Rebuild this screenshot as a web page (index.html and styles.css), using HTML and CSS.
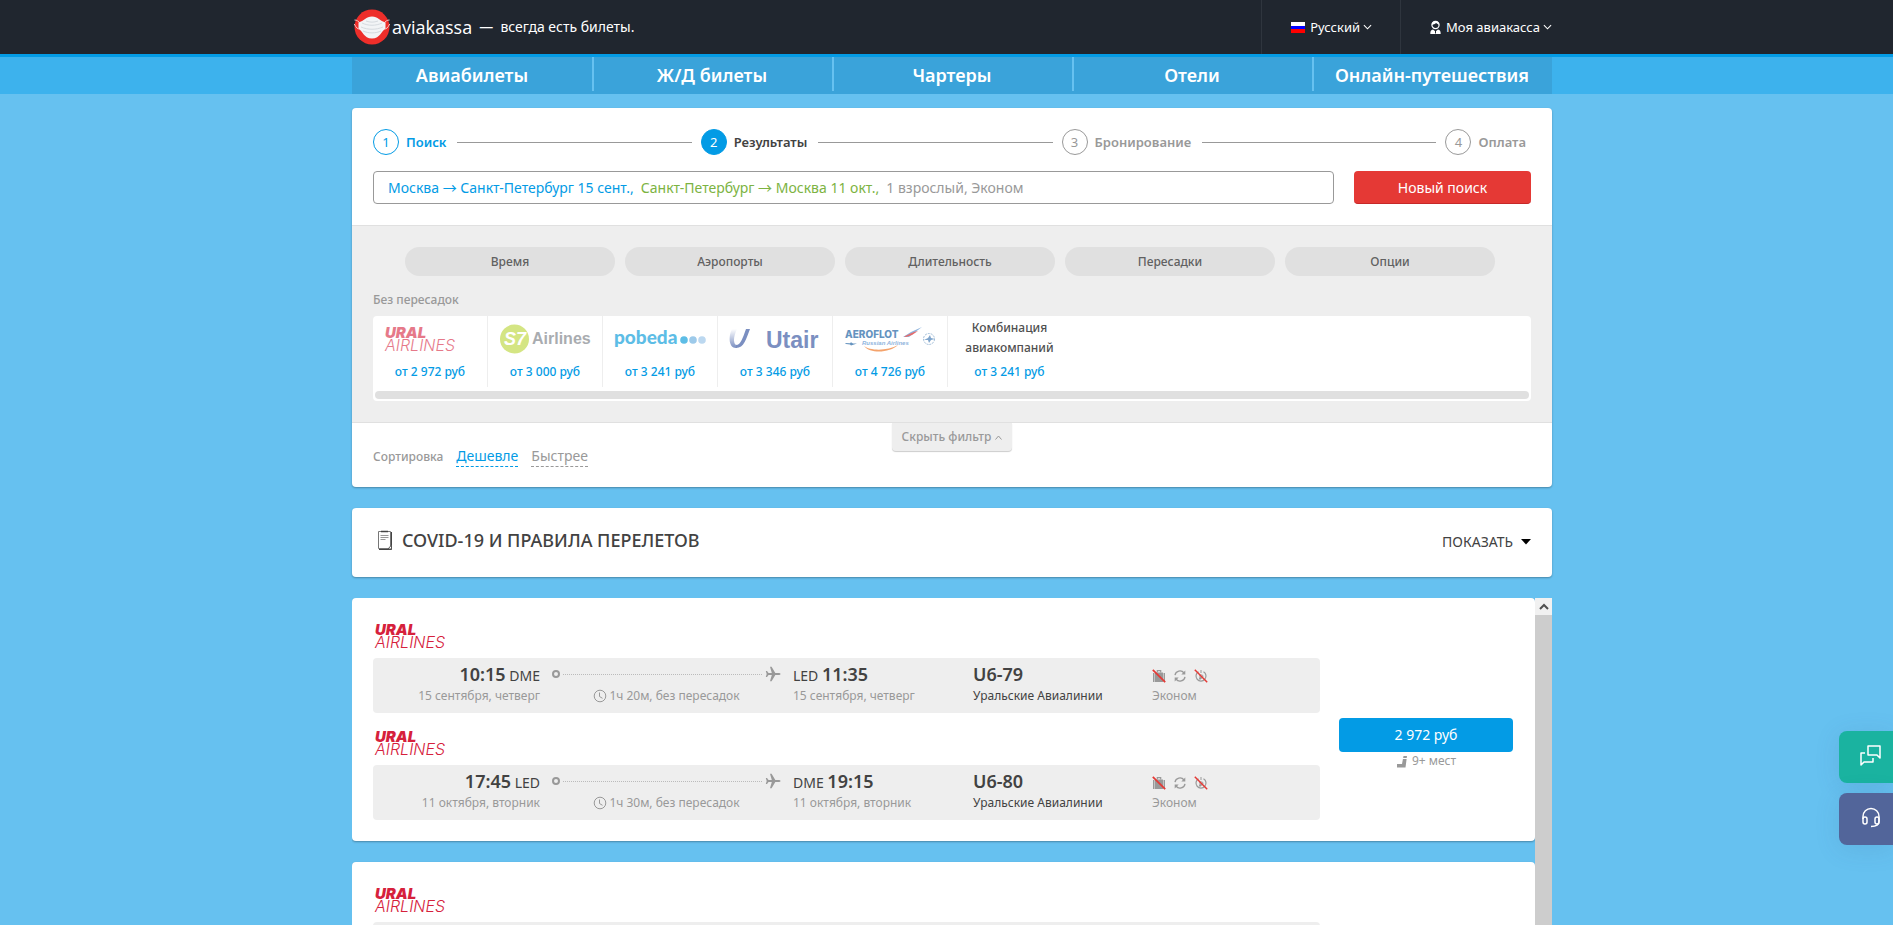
FILE: index.html
```html
<!DOCTYPE html>
<html lang="ru">
<head>
<meta charset="utf-8">
<title>Aviakassa — результаты поиска</title>
<link rel="stylesheet" href="styles.css">
</head>
<body>
<svg class="defs" aria-hidden="true">
  <symbol id="plane" viewBox="0 0 16 16">
    <path d="M15.500 8c0-.8-1-1.100-2-1.100h-3.200L6.600.8H5l1.800 6.100H3.500L2 5H.8l.9 3-.9 3H2l1.500-1.900h3.300L5 15.200h1.600l3.700-6.100h3.200c1 0 2-.3 2-1.100z" fill="#999"/>
  </symbol>
  <symbol id="clock" viewBox="0 0 14 14">
    <circle cx="7" cy="7" r="5.800" fill="none" stroke="#999"/>
    <path d="M6.500 3.500v4l3 1.800" fill="none" stroke="#999"/>
  </symbol>
  <symbol id="bag" viewBox="0 0 14 14">
    <path d="M1 4h1.500v9H1zM3 3.500h8V13H3zM11.500 4H13v9h-1.500z" fill="#999"/>
    <path d="M5.300 3.500V1.600h3.400v1.900" fill="none" stroke="#999" stroke-width="1.200"/>
    <path d="M.8.8l12.400 12.400" stroke="#e53935" stroke-width="1.700"/>
  </symbol>
  <symbol id="refresh" viewBox="0 0 14 14">
    <path d="M2 6.200a5 5 0 0 1 9-2.200M12 7.800a5 5 0 0 1-9 2.200" fill="none" stroke="#999" stroke-width="1.300"/>
    <path d="M12.300 1.400v4H8.300zM1.700 12.600v-4h4z" fill="#999"/>
  </symbol>
  <symbol id="norefund" viewBox="0 0 14 14">
    <path d="M4.500 2.700a5 5 0 1 0 5 0" fill="none" stroke="#999" stroke-width="1.200"/>
    <path d="M7 1v3M5.500 6h2.300a1.200 1.200 0 0 1 0 2.400H5.800M6 6v5M5.200 9.500h2.500" fill="none" stroke="#999"/>
    <path d="M.8.8l12.400 12.400" stroke="#e53935" stroke-width="1.500"/>
  </symbol>
  <symbol id="chev" viewBox="0 0 10 6"><path d="M1 1l4 4 4-4" fill="none" stroke="currentColor" stroke-width="1.200"/></symbol>
</svg>

<header class="top">
  <div class="wrap top-row">
    <a class="logo" href="#" aria-label="aviakassa">
      <svg width="36" height="36" viewBox="0 0 36 36" aria-hidden="true">
        <circle cx="18" cy="18" r="17.500" fill="#ee2e2a"/>
        <path d="M5 13C3 11 1 11 .5 11M4.500 20C2 19 1 16 .3 15M31 13c2-2 4-2 4.500-2M31.500 20c2.500-1 3.500-4 4.200-5" fill="none" stroke="#f3c9c8"/>
        <path d="M4.500 13.500C10 12 12 7.500 18 7.500s8 4.500 13.500 6v6.500c-4 1-5 9.500-13.500 9.500S8.500 21 4.500 20z" fill="#f2f4f6"/>
        <path d="M8 14c6 3 14 3 20 0M7 18c7 3 15 3 22 0M9 22c5 2.500 13 2.500 18 0M12 12c4 1.500 8 1.500 12 0" fill="none" stroke="#d5dadf"/>
      </svg>
      <span class="logo-name">aviakassa</span>
    </a>
    <span class="slogan">—&nbsp; всегда есть билеты.</span>
    <div class="top-menu">
      <button class="top-btn lang" type="button">
        <svg width="14" height="11" viewBox="0 0 14 11" aria-hidden="true"><path d="M0 0h14v4H0z" fill="#fff"/><path d="M0 4h14v3H0z" fill="#00f"/><path d="M0 7h14v4H0z" fill="red"/></svg>
        <span>Русский</span>
        <svg class="chev" width="9" height="6"><use href="#chev"/></svg>
      </button>
      <button class="top-btn account" type="button">
        <svg width="11" height="14" viewBox="0 0 11 14" aria-hidden="true"><circle cx="5.500" cy="5" r="3.600" fill="none" stroke="#fff" stroke-width="1.200"/><path d="M1.800 5C2 2 3.500 1 5.500 1s3.500 1 3.700 4C7.500 4 6.500 3 6 3 5 4 3.500 4.500 1.800 5z" fill="#fff"/><path d="M.3 14c0-3 .7-4 2.700-4.500l2.500 2 2.500-2c2 .5 2.700 1.500 2.700 4.500z" fill="#fff"/><path d="M5.500 10.500v3" stroke="#20262f"/></svg>
        <span>Моя авиакасса</span>
        <svg class="chev" width="9" height="6"><use href="#chev"/></svg>
      </button>
    </div>
  </div>
</header>

<nav class="nav">
  <div class="wrap nav-row">
    <a href="#">Авиабилеты</a><a href="#">Ж/Д билеты</a><a href="#">Чартеры</a><a href="#">Отели</a><a href="#">Онлайн-путешествия</a>
  </div>
</nav>

<main class="wrap main">
  <section class="card">
    <div class="search">
      <ol class="steps">
        <li class="done"><i>1</i><b>Поиск</b></li>
        <li class="line"></li>
        <li class="now"><i>2</i><b>Результаты</b></li>
        <li class="line"></li>
        <li><i>3</i><b>Бронирование</b></li>
        <li class="line"></li>
        <li><i>4</i><b>Оплата</b></li>
      </ol>
      <div class="query-row">
        <div class="query"><span class="out">Москва <span class="arrow">→</span> Санкт-Петербург 15 сент.,</span><span class="back">Санкт-Петербург <span class="arrow">→</span> Москва 11 окт.,</span><span>1 взрослый, Эконом</span></div>
        <button class="new-search" type="button">Новый поиск</button>
      </div>
    </div>
    <div class="filters">
      <div class="pills">
        <button type="button">Время</button>
        <button type="button">Аэропорты</button>
        <button type="button">Длительность</button>
        <button type="button">Пересадки</button>
        <button type="button">Опции</button>
      </div>
      <p class="caption">Без пересадок</p>
      <div class="carriers">
        <div class="carrier-list">
          <a class="carrier" href="#">
            <span class="ural faded"><b>URAL</b><span>AIRLINES</span></span>
            <span class="cost">от 2 972 руб</span>
          </a>
          <a class="carrier" href="#">
            <svg class="tall" width="90" height="30" viewBox="0 0 90 30" role="img" aria-label="S7 Airlines"><circle cx="14.500" cy="15" r="14.500" fill="#d4e583"/><text class="s7" x="4" y="21">S7</text><text class="s7-air" x="32" y="20">Airlines</text></svg>
            <span class="cost">от 3 000 руб</span>
          </a>
          <a class="carrier" href="#">
            <svg width="92" height="24" viewBox="0 0 92 24" role="img" aria-label="Pobeda"><text class="pobeda" x="0" y="17">pobeda</text><circle cx="70" cy="13" r="3.800" fill="#5dbde6"/><circle cx="79" cy="13" r="3.800" fill="#9dcaea"/><circle cx="88" cy="13" r="3.800" fill="#bcd8f0"/></svg>
            <span class="cost">от 3 241 руб</span>
          </a>
          <a class="carrier" href="#">
            <svg width="92" height="24" viewBox="0 0 92 24" role="img" aria-label="Utair"><defs><linearGradient id="ug" x1="0" x2="0" y1="0" y2="1"><stop offset="0" stop-color="#fff"/><stop offset="1" stop-color="#7b8fc1"/></linearGradient></defs><path d="M3 2C-1 10 0 21 7 21h1v-3c-4 0-4-8 0-16z" fill="url(#ug)"/><path d="M7 21c8 0 10-9 14-19h-4C14 10 12 18 7 18z" fill="#7b8fc1"/><text class="utair" x="37" y="21">Utair</text></svg>
            <span class="cost">от 3 346 руб</span>
          </a>
          <a class="carrier" href="#">
            <svg width="92" height="24" viewBox="0 0 92 24" role="img" aria-label="Aeroflot Russian Airlines"><text class="aero" x="1" y="11">AEROFLOT</text><text class="aero-sub" x="18" y="18">Russian Airlines</text><path d="M1 16l5 .3 1-1 2 1.200h4l-3 1-3 1-1-1-4-.5z" fill="#6593bf"/><path d="M20 19c6 5 24 5 34-1-8 8-28 9-34 1z" fill="#f4a36c"/><path d="M59 10l8-5 11-5-8 6-5 4z" fill="#8fb4dd"/><path d="M60 9.500l10-4.500 4-1-6 4-6 2z" fill="#e66b6b"/><circle cx="85" cy="12" r="5.500" fill="none" stroke="#9fbcd8" stroke-dasharray="2 1"/><path d="M80 13l4-2 2-3 1 3 4 1-4 1-2 3-1-3z" fill="#7fa5cc"/></svg>
            <span class="cost">от 4 726 руб</span>
          </a>
          <a class="carrier combo" href="#">
            <span class="combo-name">Комбинация авиакомпаний</span>
            <span class="cost">от 3 241 руб</span>
          </a>
        </div>
        <div class="hbar"></div>
      </div>
    </div>
    <div class="sort">
      <button class="toggle" type="button">Скрыть фильтр <svg width="7" height="5" viewBox="0 0 7 5" aria-hidden="true"><path d="M.5 4.500l3-3.500 3 3.500" fill="none" stroke="#999"/></svg></button>
      <span>Сортировка</span><a class="sort-link on" href="#">Дешевле</a><a class="sort-link" href="#">Быстрее</a>
    </div>
  </section>

  <section class="card rules">
    <svg width="16" height="21" viewBox="0 0 16 21" aria-hidden="true"><path d="M1.500 1.500h12v17h-12z" fill="#fff" stroke="#777"/><path d="M14.500 2v17.500H2" fill="none" stroke="#444"/><path d="M4 1.500h7" stroke="#444" stroke-width="1.500"/><path d="M3.500 5.500h8M3.500 7.500h8M3.500 9.500h5" stroke="#999"/><path d="M11 19l3.500-4v4z" fill="#fff" stroke="#555"/></svg>
    <h2>COVID-19 И ПРАВИЛА ПЕРЕЛЕТОВ</h2>
    <button class="show" type="button">ПОКАЗАТЬ <svg width="10" height="6" viewBox="0 0 10 6" aria-hidden="true"><path d="M0 0h10L5 5.500z" fill="#000"/></svg></button>
  </section>

  <section class="results">
    <div class="list">
      <article class="card ticket">
        <div class="legs">
          <p class="ural"><b>URAL</b><span>AIRLINES</span></p>
          <div class="leg">
            <div class="dep"><p class="point"><strong>10:15</strong> DME</p><p class="note">15 сентября, четверг</p></div>
            <div class="way"><p class="track"><i class="dot"></i><i class="dots"></i><svg width="16" height="16"><use href="#plane"/></svg></p><p class="note dur"><svg width="14" height="14"><use href="#clock"/></svg>1ч 20м, без пересадок</p></div>
            <div><p class="point">LED <strong>11:35</strong></p><p class="note">15 сентября, четверг</p></div>
            <div><p class="point"><strong>U6-79</strong></p><p class="note company">Уральские Авиалинии</p></div>
            <div class="class"><p class="icons"><svg width="14" height="14"><use href="#bag"/></svg><svg width="14" height="14"><use href="#refresh"/></svg><svg width="14" height="14"><use href="#norefund"/></svg></p><p class="note">Эконом</p></div>
          </div>
          <p class="ural"><b>URAL</b><span>AIRLINES</span></p>
          <div class="leg">
            <div class="dep"><p class="point"><strong>17:45</strong> LED</p><p class="note">11 октября, вторник</p></div>
            <div class="way"><p class="track"><i class="dot"></i><i class="dots"></i><svg width="16" height="16"><use href="#plane"/></svg></p><p class="note dur"><svg width="14" height="14"><use href="#clock"/></svg>1ч 30м, без пересадок</p></div>
            <div><p class="point">DME <strong>19:15</strong></p><p class="note">11 октября, вторник</p></div>
            <div><p class="point"><strong>U6-80</strong></p><p class="note company">Уральские Авиалинии</p></div>
            <div class="class"><p class="icons"><svg width="14" height="14"><use href="#bag"/></svg><svg width="14" height="14"><use href="#refresh"/></svg><svg width="14" height="14"><use href="#norefund"/></svg></p><p class="note">Эконом</p></div>
          </div>
        </div>
        <div class="buy">
          <button class="price" type="button">2 972 руб</button>
          <p class="note seats"><svg width="12" height="13" viewBox="0 0 12 13" aria-hidden="true"><path d="M7.500 1H11L9.500 12.500H1V9h5z" fill="#999"/><path d="M7 3.500h4" stroke="#fff"/></svg>9+ мест</p>
        </div>
      </article>
      <article class="card ticket">
        <div class="legs">
          <p class="ural"><b>URAL</b><span>AIRLINES</span></p>
          <div class="leg"></div>
        </div>
      </article>
    </div>
    <div class="vbar"><span class="vbar-up"><svg width="10" height="7" viewBox="0 0 10 7" aria-hidden="true"><path d="M1 6l4-4 4 4" fill="none" stroke="#505050" stroke-width="2"/></svg></span></div>
  </section>
</main>

<aside class="float">
  <button class="chat" type="button" aria-label="Чат"><svg width="21" height="21" viewBox="0 0 21 21" aria-hidden="true"><path d="M8 1h12v12l-3-3H8zM5 8H1v12l3-3h9v-4" fill="none" stroke="#fff" stroke-width="1.500" stroke-linejoin="round"/></svg></button>
  <button class="call" type="button" aria-label="Поддержка"><svg width="20" height="21" viewBox="0 0 20 21" aria-hidden="true"><path d="M2 12V9.500a8 8 0 0 1 16 0V14c0 3.500-3 5.500-8 5.500" fill="none" stroke="#fff" stroke-width="1.500"/><rect x="2" y="10" width="4" height="7" rx="2" fill="none" stroke="#fff" stroke-width="1.500"/><rect x="14" y="10" width="4" height="7" rx="2" fill="none" stroke="#fff" stroke-width="1.500"/></svg></button>
</aside>
</body>
</html>
```
FILE: styles.css
```css
* { box-sizing: border-box; }

body {
  margin: 0;
  height: 100vh;
  overflow: hidden;
  display: flex;
  flex-direction: column;
  background: #66c1f0;
  color: #424242;
  font: 14px/20px "Noto Sans", "Open Sans", sans-serif;
}

p, ol, h2 { margin: 0; padding: 0; }
i { font-style: normal; }
a { color: inherit; text-decoration: none; }
button { border: 0; padding: 0; background: none; color: inherit; font: inherit; cursor: pointer; }
svg { display: block; flex: none; overflow: visible; }
.defs { position: absolute; width: 0; height: 0; }

.wrap { width: 100%; max-width: 1211px; margin: 0 auto; padding-left: 11px; }

/* header */
.top { background: #20262f; color: #fff; border-bottom: 3px solid #039be5; }
.top-row { display: flex; align-items: center; height: 54px; }
.logo { display: flex; align-items: center; gap: 2px; margin-left: 2px; }
.logo-name { font: 18px/24px "Open Sans", sans-serif; }
.slogan { margin-left: 7px; }
.top-menu { display: flex; margin-left: auto; height: 100%; font-size: 13px; }
.top-btn { display: flex; align-items: center; gap: 5px; border-left: 1px solid #2f353e; }
.top-btn .chev { margin-left: -2px; }
.lang { padding: 0 28px 0 29px; }
.account { padding-left: 29px; }

/* navigation */
.nav { background: #3db2ed; }
.nav-row { display: flex; background: #3aa3da content-box; }
.nav-row a {
  flex: 1;
  padding: 6px 0 7px;
  color: #fff;
  font-size: 18px;
  font-weight: 600;
  line-height: 24px;
  text-align: center;
  background: linear-gradient(#66c1f0, #66c1f0) left top / 2px 34px no-repeat;
}
.nav-row a:first-child { background: none; }

.main { flex: 1; min-height: 0; display: flex; flex-direction: column; gap: 21px; padding-top: 14px; }
.card { background: #fff; border-radius: 4px; box-shadow: 0 1px 2px rgba(0, 0, 0, .3); }

/* search */
.search { padding: 21px; border-bottom: 1px solid #e0e0e0; }
.steps { display: flex; align-items: center; list-style: none; color: #999; font-size: 13px; padding-right: 5px; }
.steps li { display: flex; align-items: center; gap: 7px; }
.steps i { width: 26px; height: 26px; border: 1px solid #999; border-radius: 50%; line-height: 24px; text-align: center; }
.steps b { font-weight: 600; }
.steps .line { flex: 1; height: 1px; margin: 0 9px 0 11px; background: #999; }
.steps .done { color: #039be5; }
.steps .done i { border-color: #039be5; }
.steps .now i { background: #039be5; border-color: #039be5; color: #fff; }
.steps .now { color: #424242; }
.query-row { display: flex; gap: 20px; margin-top: 16px; }
.query { flex: 1; display: flex; gap: 7px; height: 33px; padding: 6px 14px 5px; border: 1px solid #999; border-radius: 4px; color: #999; }
.query .out { color: #039be5; }
.query .back { color: #7cb342; }
.arrow { font-family: "Noto Sans CJK SC", sans-serif; line-height: 16px; }
.new-search { width: 177px; height: 33px; padding-top: 1px; border-radius: 4px; background: #e53935; border-bottom: 1px solid #c62828; color: #fff; }

/* filters */
.filters { padding: 21px; background: #eee; border-bottom: 1px solid #e0e0e0; font-size: 12px; font-weight: 500; }
.pills { display: flex; gap: 10px; padding: 0 36px 0 32px; }
.pills button { flex: 1; height: 29px; border-radius: 15px; background: #e0e0e0; color: #616161; }
.caption { margin-top: 14px; color: #999; }
.carriers { margin-top: 6px; padding: 0 2px 2px 0; border-radius: 4px; background: #fff; }
.carrier-list { display: flex; }
.carrier { display: flex; flex-direction: column; align-items: center; justify-content: space-between; width: 115px; height: 71px; padding: 11px 0 5px; border-right: 1px solid #eee; }
.carrier .tall { margin-top: -3px; }
.combo { width: 123px; padding-top: 2px; border: 0; }
.combo-name { width: 100px; color: #505050; text-align: center; }
.cost { color: #039be5; }
.hbar { height: 8px; margin: 4px 0 0 2px; border-radius: 4px; background: #e0e0e0; }

.sort { position: relative; display: flex; align-items: center; gap: 13px; padding: 23px 21px 20px; font-size: 12px; font-weight: 500; color: #999; }
.toggle { position: absolute; top: 0; left: 50%; margin-left: -60px; width: 120px; height: 28px; display: flex; align-items: center; justify-content: center; gap: 4px; background: #eee; border-radius: 0 0 4px 4px; box-shadow: 0 1px 1px rgba(0, 0, 0, .2); }
.sort-link { font-size: 14px; font-weight: 400; border-bottom: 1px dashed #999; }
.sort-link.on { color: #039be5; border-color: #039be5; }

/* flight rules */
.rules { display: flex; align-items: center; gap: 9px; padding: 20px 21px 24px 25px; }
.rules h2 { font-size: 18px; font-weight: 500; line-height: 25px; }
.show { display: flex; align-items: center; gap: 8px; margin-left: auto; padding-top: 2px; }

/* results */
.results { flex: 1; min-height: 0; display: flex; overflow: hidden; }
.list { flex: 1; display: flex; flex-direction: column; gap: 21px; }
.ticket { flex: none; display: flex; gap: 19px; padding: 8px 22px 21px 21px; }
.legs { flex: 1; max-width: 947px; }
.leg { display: grid; grid-template-columns: 167fr 253fr 180fr 179fr 168fr; height: 55px; padding: 5px 0 6px; border-radius: 4px; background: #eee; }
.leg p { height: 22px; line-height: 22px; }
.dep { text-align: right; }
.point strong { font-size: 18px; font-weight: 600; }
.note { color: #999; font-size: 12px; }
.company { color: #424242; }
.way { padding: 0 12px; }
.track { display: flex; align-items: center; gap: 3px; }
.dot { width: 8px; height: 8px; border: 2px solid #999; border-radius: 50%; }
.dots { flex: 1; border-top: 1px dotted #bbb; }
.dur { display: flex; align-items: center; justify-content: center; gap: 2px; }
.leg .icons { display: flex; align-items: center; gap: 7px; height: 25px; }
.leg .class .note { line-height: 15px; }
.buy { width: 174px; align-self: center; padding-top: 62px; }
.price { display: block; width: 100%; height: 34px; border-radius: 4px; background: #039be5; color: #fff; }
.seats { display: flex; align-items: center; justify-content: center; gap: 4px; line-height: 18px; }

.vbar { width: 17px; background: #cdcdcd; }
.vbar-up { display: flex; align-items: center; justify-content: center; height: 17px; background: #f1f1f1; }

/* floating help buttons */
.float { position: fixed; right: 0; bottom: 80px; display: flex; flex-direction: column; gap: 10px; }
.float button { display: flex; align-items: center; justify-content: center; width: 54px; height: 52px; padding: 0 0 3px 9px; border-radius: 8px 0 0 8px; box-shadow: 0 4px 24px rgba(60, 100, 150, .15); }
.chat { background: #1ab3a0; }
.call { background: #52659a; }

/* airline wordmarks */
.ural { width: 90px; font: italic 300 15px/12px Inter, sans-serif; color: #d6213c; }
.ural b { display: block; font-weight: 900; }
.ural span { display: block; font-size: 16px; }
.legs .ural { margin: 18px 0 10px 2px; }
.faded { opacity: .6; }
.s7 { font: italic bold 18px "Liberation Sans", sans-serif; fill: #fff; }
.s7-air { font: bold 16px "Liberation Sans", sans-serif; fill: #a9acb0; }
.pobeda { font: 900 19px Lato, sans-serif; fill: #5dbde6; }
.utair { font: bold 23px "Liberation Sans", sans-serif; fill: #7b8fc1; }
.aero { font: 800 10px Inter, sans-serif; fill: #6593bf; }
.aero-sub { font: italic bold 6px "Liberation Sans", sans-serif; fill: #8fb4dd; }
```
